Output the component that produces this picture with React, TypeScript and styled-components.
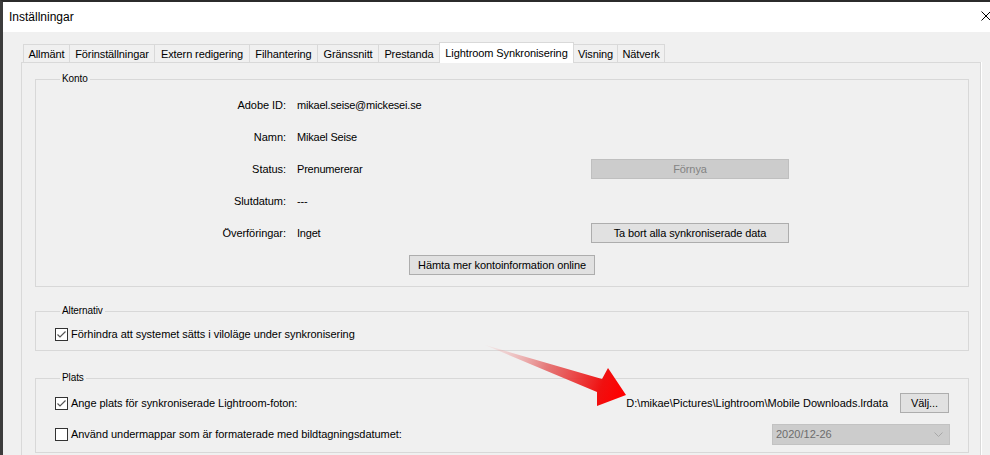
import styled, { createGlobalStyle } from "styled-components";

const GlobalStyle = createGlobalStyle`
  html, body {
    margin: 0;
    padding: 0;
    background: #f0f0f0;
  }
  body {
    font-family: "Liberation Sans", Arial, sans-serif;
    font-size: 11px;
    color: #000;
  }
`;

const Window = styled.div`
  position: relative;
  width: 990px;
  height: 455px;
  box-sizing: border-box;
  overflow: hidden;
  border-top: 2px solid #2b2b2b;
  border-left: 3px solid #3c3c3c;
  background: #f0f0f0;
  display: flex;
  flex-direction: column;
`;

const TitleBar = styled.div`
  height: 30px;
  flex: none;
  background: #fff;
  display: flex;
  align-items: center;
  justify-content: space-between;
  padding-left: 6px;
`;

const Title = styled.span`
  font-size: 12px;
  margin-top: -1px;
`;

const CloseIcon = styled.svg`
  width: 10px;
  height: 10px;
  margin-right: -1px;
  margin-top: -2px;
`;

const Body = styled.div`
  flex: 1;
  padding: 10px 0 0 18px;
  min-height: 0;
`;

const TabStrip = styled.div`
  display: flex;
  align-items: flex-end;
  height: 20px;
  margin-left: 2px;
  position: relative;
  z-index: 1;
`;

const Tab = styled.div<{ $w: number; $active?: boolean }>`
  box-sizing: border-box;
  width: ${(p) => p.$w}px;
  height: ${(p) => (p.$active ? 21 : 18)}px;
  margin-bottom: ${(p) => (p.$active ? -1 : 0)}px;
  margin-left: -1px;
  &:first-child {
    margin-left: 0;
  }
  border: 1px solid #d9d9d9;
  border-bottom: 0;
  background: ${(p) => (p.$active ? "#fff" : "#f0f0f0")};
  position: relative;
  z-index: ${(p) => (p.$active ? 2 : 1)};
  display: flex;
  align-items: center;
  justify-content: center;
  padding-top: ${(p) => (p.$active ? 0 : 1)}px;
  white-space: nowrap;
  letter-spacing: -0.1px;
`;

const Panel = styled.div`
  width: 960px;
  box-sizing: border-box;
  height: 420px;
  border: 1px solid #d9d9d9;
  box-shadow: 1px 0 0 #fff;
  background: #f0f0f0;
  padding: 10px 11px 0 13px;
`;

const GroupBox = styled.fieldset<{ $mt?: number; $pt: number; $pb: number }>`
  margin: ${(p) => p.$mt ?? 0}px 0 0 0;
  padding: ${(p) => p.$pt}px 19px ${(p) => p.$pb}px 19px;
  border: 1px solid #d8d8d8;
  min-width: 0;
`;

const Legend = styled.legend`
  font-size: 10px;
  line-height: 12px;
  padding: 0 2px;
  margin-left: 5px;
  letter-spacing: -0.1px;
`;

const AccountGrid = styled.div`
  display: grid;
  grid-template-columns: 250px 283px 198px;
  grid-auto-rows: 20px;
  column-gap: 11px;
  row-gap: 12px;
  margin-left: -19px;
  align-items: center;
`;

const FieldLabel = styled.span`
  text-align: right;
  letter-spacing: -0.05px;
`;

const FieldValue = styled.span`
  letter-spacing: -0.2px;
`;

const Button = styled.button<{ $w: number; $h?: number; $disabled?: boolean }>`
  box-sizing: border-box;
  width: ${(p) => p.$w}px;
  height: ${(p) => p.$h ?? 20}px;
  margin: 0;
  padding: 0;
  font-family: inherit;
  font-size: 11px;
  letter-spacing: -0.1px;
  border: 1px solid ${(p) => (p.$disabled ? "#bfbfbf" : "#adadad")};
  background: ${(p) => (p.$disabled ? "#cccccc" : "#e1e1e1")};
  color: ${(p) => (p.$disabled ? "#838383" : "#000")};
`;

const CenterRow = styled.div`
  display: flex;
  justify-content: center;
  margin-top: 12px;
`;

const Row = styled.div<{ $mt?: number }>`
  display: flex;
  align-items: center;
  height: 20px;
  margin-top: ${(p) => p.$mt ?? 0}px;
`;

const CheckLabel = styled.label`
  display: flex;
  align-items: center;
  gap: 3px;
  letter-spacing: -0.05px;
`;

const Box = styled.span`
  box-sizing: border-box;
  width: 13px;
  height: 13px;
  border: 1px solid #333;
  background: #fff;
  display: flex;
  align-items: center;
  justify-content: center;
`;

const RightCluster = styled.div`
  margin-left: auto;
  display: flex;
  align-items: center;
  gap: 12px;
`;

const PathText = styled.span`
  letter-spacing: 0;
`;

const Select = styled.div`
  margin-left: auto;
  box-sizing: border-box;
  width: 178px;
  height: 21px;
  margin-right: -1px;
  background: #cccccc;
  border: 1px solid #c2c2c2;
  color: #6d6d6d;
  display: flex;
  align-items: center;
  justify-content: space-between;
  padding: 0 6px 0 3px;
`;

const ArrowOverlay = styled.svg`
  position: absolute;
  left: -3px;
  top: -2px;
  width: 990px;
  height: 455px;
  pointer-events: none;
`;

const tabs = [
  { label: "Allmänt", w: 47 },
  { label: "Förinställningar", w: 86 },
  { label: "Extern redigering", w: 96 },
  { label: "Filhantering", w: 69 },
  { label: "Gränssnitt", w: 62 },
  { label: "Prestanda", w: 62 },
  { label: "Lightroom Synkronisering", w: 135, active: true },
  { label: "Visning", w: 45 },
  { label: "Nätverk", w: 48 },
];

const account = [
  { label: "Adobe ID:", value: "mikael.seise@mickesei.se" },
  { label: "Namn:", value: "Mikael Seise" },
  { label: "Status:", value: "Prenumererar", button: "Förnya", disabled: true },
  { label: "Slutdatum:", value: "---" },
  { label: "Överföringar:", value: "Inget", button: "Ta bort alla synkroniserade data" },
];

const CheckBox = ({ checked }: { checked?: boolean }) => (
  <Box>
    {checked && (
      <svg width="11" height="11" viewBox="0 0 11 11">
        <path d="M1.5 5.5 L4 8 L9.5 2.5" fill="none" stroke="#555" strokeWidth="1.2" />
      </svg>
    )}
  </Box>
);

const App = () => {
  return (
    <>
      <GlobalStyle />
      <Window>
        <TitleBar>
          <Title>Inställningar</Title>
          <CloseIcon viewBox="0 0 10 10">
            <path d="M0.5 0.5 L9.5 9.5 M9.5 0.5 L0.5 9.5" stroke="#000" strokeWidth="1" />
          </CloseIcon>
        </TitleBar>
        <Body>
          <TabStrip>
            {tabs.map((t) => (
              <Tab key={t.label} $w={t.w} $active={t.active}>
                {t.label}
              </Tab>
            ))}
          </TabStrip>
          <Panel>
            <GroupBox $pt={10} $pb={11}>
              <Legend>Konto</Legend>
              <AccountGrid>
                {account.map((r) => [
                  <FieldLabel key={r.label + "-l"}>{r.label}</FieldLabel>,
                  <FieldValue key={r.label + "-v"}>{r.value}</FieldValue>,
                  r.button ? (
                    <Button key={r.label + "-b"} $w={198} $disabled={r.disabled}>
                      {r.button}
                    </Button>
                  ) : (
                    <span key={r.label + "-b"} />
                  ),
                ])}
              </AccountGrid>
              <CenterRow>
                <Button $w={186}>Hämta mer kontoinformation online</Button>
              </CenterRow>
            </GroupBox>

            <GroupBox $mt={18} $pt={7} $pb={6}>
              <Legend>Alternativ</Legend>
              <Row>
                <CheckLabel>
                  <CheckBox checked />
                  Förhindra att systemet sätts i viloläge under synkronisering
                </CheckLabel>
              </Row>
            </GroupBox>

            <GroupBox $mt={21} $pt={9} $pb={8}>
              <Legend>Plats</Legend>
              <Row>
                <CheckLabel>
                  <CheckBox checked />
                  Ange plats för synkroniserade Lightroom-foton:
                </CheckLabel>
                <RightCluster>
                  <PathText>D:\mikae\Pictures\Lightroom\Mobile Downloads.lrdata</PathText>
                  <Button $w={49}>Välj...</Button>
                </RightCluster>
              </Row>
              <Row $mt={11}>
                <CheckLabel>
                  <CheckBox />
                  Använd undermappar som är formaterade med bildtagningsdatumet:
                </CheckLabel>
                <Select>
                  <span>2020/12-26</span>
                  <svg width="9" height="5" viewBox="0 0 9 5">
                    <path d="M0.5 0.5 L4.5 4.5 L8.5 0.5" fill="none" stroke="#a8a8a8" />
                  </svg>
                </Select>
              </Row>
            </GroupBox>
          </Panel>
        </Body>
        <ArrowOverlay viewBox="0 0 990 455">
          <defs>
            <linearGradient id="arrowFill" gradientUnits="userSpaceOnUse" x1="485" y1="345" x2="622" y2="394">
              <stop offset="0" stopColor="#f2b8b8" stopOpacity="0.15" />
              <stop offset="0.45" stopColor="#e25a5a" stopOpacity="0.8" />
              <stop offset="0.85" stopColor="#f01010" />
              <stop offset="1" stopColor="#ff0000" />
            </linearGradient>
          </defs>
          <polygon
            points="485,345 602,379 608,368 626,395 597,406 597,392"
            fill="url(#arrowFill)"
          />
        </ArrowOverlay>
      </Window>
    </>
  );
};

export default App;
